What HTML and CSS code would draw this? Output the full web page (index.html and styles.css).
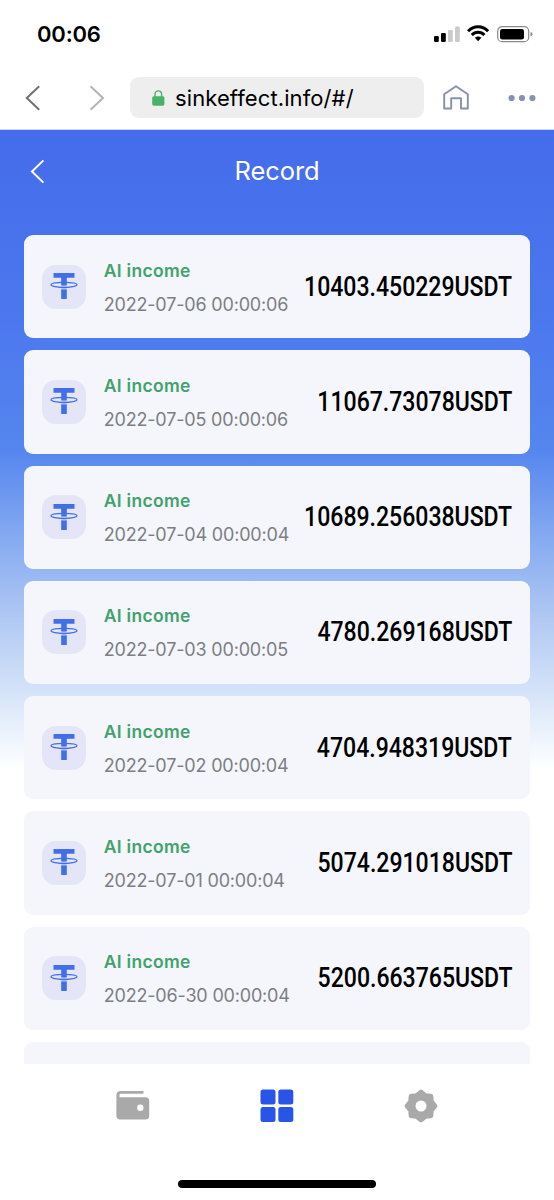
FILE: index.html
```html
<!DOCTYPE html>
<html lang="en">
<head>
<meta charset="utf-8">
<title>Record</title>
<link rel="stylesheet" href="styles.css">
</head>
<body>
<svg class="symbols" aria-hidden="true">
  <symbol id="tether" viewBox="0 0 28 26">
    <ellipse cx="14" cy="11.8" rx="13.1" ry="2.5" fill="none" stroke="#426ee8" stroke-width="1.2"/>
    <path d="M3.5 0H24.5V4.7H16.8V26H11.2V4.7H3.5Z" fill="#426ee8"/>
    <path d="M9 12.9Q14 13.4 19 12.9M9 15.7Q14 16.1 19 15.7" fill="none" stroke="#e4e6f7" stroke-width="1"/>
    <path d="M9 14.3Q14 14.7 19 14.3" fill="none" stroke="#426ee8" stroke-width="1.1"/>
  </symbol>
</svg>
<header class="status">
  <time class="clock">00:06</time>
  <svg class="indicators" width="100" height="18" viewBox="0 0 100 18">
    <rect x="0" y="11" width="4.8" height="6" rx="1.2"/>
    <rect x="7" y="8" width="4.8" height="9" rx="1.2"/>
    <g fill="#cbcbcb"><rect x="14" y="5" width="4.8" height="12" rx="1.2"/><rect x="21" y="1.5" width="4.8" height="15.5" rx="1.2"/></g>
    <g fill="none" stroke="#000" stroke-width="3"><path d="M34.1 6.2C39.7 .3 48.5 .3 54.1 6.2"/><path d="M37.8 10C41.4 6.3 46.8 6.3 50.4 10"/></g>
    <path d="M40.8 12.7Q44.1 10.1 47.4 12.7L44.1 16.3Z"/>
    <rect x="63.7" y="1.7" width="31" height="15" rx="4.5" fill="none" stroke="#8b8b8b" stroke-width="1.2"/>
    <rect x="66" y="4" width="24" height="10.6" rx="2.4"/>
    <path d="M96.5 7Q98.5 7.5 98.5 9.3T96.5 11.6Z" fill="#8b8b8b"/>
  </svg>
</header>
<nav class="browser">
  <svg class="arrow" width="16" height="26" viewBox="0 0 16 26"><path d="M14.2 1.3L1.8 13L14.2 24.7" fill="none" stroke="#707070" stroke-width="2"/></svg>
  <svg class="arrow next" width="16" height="26" viewBox="0 0 16 26"><path d="M1.5 1.3L14 13L1.5 24.7" fill="none" stroke="#b4b4b4" stroke-width="2"/></svg>
  <div class="address">
    <svg width="13" height="16" viewBox="0 0 13 16"><rect x=".2" y="6.2" width="12.2" height="9.5" rx="1.6" fill="#4bb069"/><path d="M3 7V4.2C3 -.2 9.6 -.2 9.6 4.2V7" fill="none" stroke="#4bb069" stroke-width="1.4"/></svg>
    <span class="url">sinkeffect.info/#/</span>
  </div>
  <svg class="home" width="26" height="26" viewBox="0 0 26 26"><path d="M1.2 9.2L13 1.2L24.8 9.2V23.5H18V13.3H8.2V23.5H1.2Z" fill="none" stroke="#8591b0" stroke-width="1.9" stroke-linejoin="round"/></svg>
  <svg class="more" width="28" height="8" viewBox="0 0 28 8" fill="#8591b0"><circle cx="3.6" cy="4" r="3.1"/><circle cx="14" cy="4" r="3.1"/><circle cx="24.4" cy="4" r="3.1"/></svg>
</nav>
<main class="page">
  <div class="titlebar">
    <svg class="back" width="15" height="25" viewBox="0 0 15 25"><path d="M13.4 1.4L2 12.5L13.4 23.6" fill="none" stroke="#fff" stroke-width="2"/></svg>
    <h1>Record</h1>
  </div>
  <section class="list">
    <article class="card"><div class="coin"><svg width="28" height="26"><use href="#tether"/></svg></div><div class="detail"><b>AI income</b><time>2022-07-06 00:00:06</time></div><div class="amount">10403.450229USDT</div></article>
    <article class="card"><div class="coin"><svg width="28" height="26"><use href="#tether"/></svg></div><div class="detail"><b>AI income</b><time>2022-07-05 00:00:06</time></div><div class="amount">11067.73078USDT</div></article>
    <article class="card"><div class="coin"><svg width="28" height="26"><use href="#tether"/></svg></div><div class="detail"><b>AI income</b><time>2022-07-04 00:00:04</time></div><div class="amount">10689.256038USDT</div></article>
    <article class="card"><div class="coin"><svg width="28" height="26"><use href="#tether"/></svg></div><div class="detail"><b>AI income</b><time>2022-07-03 00:00:05</time></div><div class="amount">4780.269168USDT</div></article>
    <article class="card"><div class="coin"><svg width="28" height="26"><use href="#tether"/></svg></div><div class="detail"><b>AI income</b><time>2022-07-02 00:00:04</time></div><div class="amount">4704.948319USDT</div></article>
    <article class="card"><div class="coin"><svg width="28" height="26"><use href="#tether"/></svg></div><div class="detail"><b>AI income</b><time>2022-07-01 00:00:04</time></div><div class="amount">5074.291018USDT</div></article>
    <article class="card"><div class="coin"><svg width="28" height="26"><use href="#tether"/></svg></div><div class="detail"><b>AI income</b><time>2022-06-30 00:00:04</time></div><div class="amount">5200.663765USDT</div></article>
    <article class="card"></article>
  </section>
</main>
<footer class="tabs">
  <div class="tabrow">
    <svg width="34" height="34" viewBox="0 0 34 34"><path d="M5 2H27.5V4.8H5Q3.5 4.8 3.5 6.2V8.2H29.5Q33.2 8.2 33.2 11.8V26.8Q33.2 30.6 29.5 30.6H4.2Q.4 30.6 .4 26.8V6.2Q.4 2 5 2Z" fill="#a9a9a9"/><circle cx="24.3" cy="18.8" r="3.2" fill="#fff"/></svg>
    <svg width="34" height="34" viewBox="0 0 34 34" fill="#2854e8"><rect x=".5" y=".5" width="15" height="15" rx="2.5"/><rect x="18.3" y=".5" width="15" height="15" rx="2.5"/><rect x=".5" y="18" width="15" height="15" rx="2.5"/><rect x="18.3" y="18" width="15" height="15" rx="2.5"/></svg>
    <svg width="34" height="34" viewBox="-17 -17 34 34"><g fill="#a9a9a9" stroke="#a9a9a9" stroke-width="5" stroke-linejoin="round"><path d="M0-13.8L4.3-10.3L9.8-9.8L10.3-4.3L13.8 0L10.3 4.3L9.8 9.8L4.3 10.3L0 13.8L-4.3 10.3L-9.8 9.8L-10.3 4.3L-13.8 0L-10.3-4.3L-9.8-9.8L-4.3-10.3Z"/></g><circle r="5.5" fill="#fff"/></svg>
  </div>
  <div class="homebar"></div>
</footer>
</body>
</html>
```
FILE: styles.css
```css
* { box-sizing: border-box; }
body { margin: 0; width: 554px; height: 1200px; display: flex; flex-direction: column; overflow: hidden; background: #fff; font-family: Inter, "Liberation Sans", sans-serif; }
svg { display: block; flex: none; }
.symbols { position: absolute; width: 0; height: 0; }
.status { height: 66px; flex: none; display: flex; justify-content: space-between; padding: 21px 20px 0 37px; }
.clock { font-size: 22px; line-height: 27px; font-weight: 600; letter-spacing: -.2px; }
.indicators { margin-top: 4px; }
.browser { height: 64px; flex: none; display: flex; align-items: center; padding: 0 18px 0 25px; border-bottom: 1px solid #cbd5f5; }
.next { margin-left: 48px; }
.address { width: 294px; height: 41px; margin-left: 25px; padding-left: 22px; border-radius: 9px; background: #eee; display: flex; align-items: center; gap: 10px; }
.url { font-size: 22px; line-height: 28px; letter-spacing: .1px; white-space: nowrap; }
.home { margin-left: 19px; }
.more { margin-left: auto; }
.page { height: 934px; flex: none; overflow: hidden; background: linear-gradient(180deg, #456ceb 0, #4b77ee 180px, #5586ee 320px, #84a9f1 405px, #b1c9f3 490px, #dce8fa 575px, #fff 640px); }
.titlebar { height: 105px; padding: 0 30px; display: grid; grid-template-columns: 15px 1fr 15px; align-items: start; }
.back { margin-top: 29px; }
h1 { margin: 25px 0 0; text-align: center; color: #fff; font-size: 25.5px; line-height: 32px; font-weight: 400; letter-spacing: -.1px; }
.list { padding: 0 23.7px; display: flex; flex-direction: column; gap: 12px; }
.card { height: 103.25px; flex: none; border-radius: 9px; background: #f4f6fb; padding: 0 18px; display: flex; align-items: center; }
.coin { width: 44px; height: 44px; flex: none; border-radius: 14px; background: #e4e6f7; display: grid; place-items: center; }
.coin svg { margin-bottom: 1px; }
.detail { margin: 2px 0 0 18px; flex: none; display: flex; flex-direction: column; gap: 12px; white-space: nowrap; }
.detail b { color: #43a16d; font-size: 17.5px; line-height: 22px; font-weight: 600; letter-spacing: .3px; }
.detail time { color: #7c7e83; font-size: 18px; line-height: 22px; font-weight: 400; letter-spacing: -.18px; }
.amount { flex: 1; min-width: 0; display: flex; justify-content: flex-end; transform: scaleX(.86); transform-origin: right center; font: 500 26.8px/32px Roboto, sans-serif; white-space: nowrap; }
.tabs { height: 136px; flex: none; background: #fff; display: flex; flex-direction: column; align-items: center; justify-content: space-between; padding: 25px 0 12px; }
.tabrow { width: 322px; display: flex; justify-content: space-between; }
.homebar { width: 198px; height: 8px; border-radius: 4px; background: #000; }
```
